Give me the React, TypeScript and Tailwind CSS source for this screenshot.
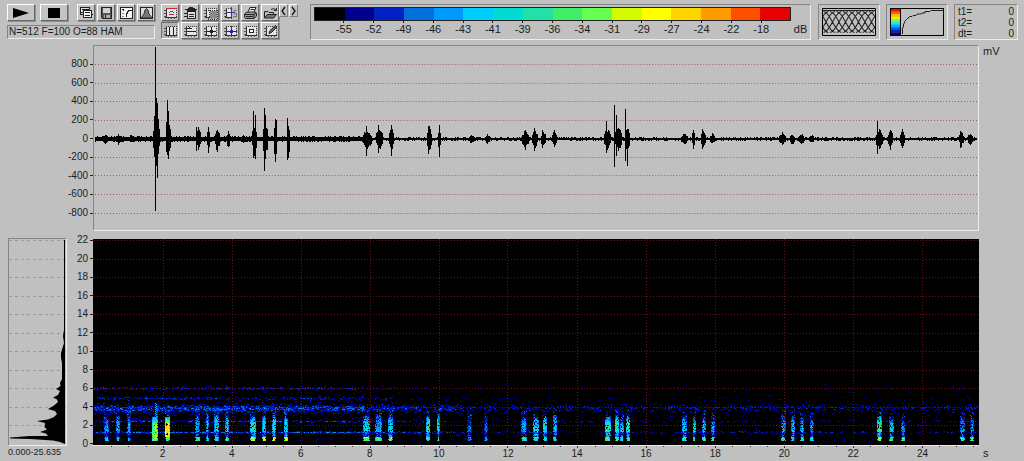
import type { ReactNode } from "react";

const PLOT_W = 885;
const WAVE_H = 184;
const SPEC_H = 206;
const SECOND = 34.45;

function randomSource(seed: number) {
  let s = seed;
  return () => {
    s = (s * 1664525 + 1013904223) >>> 0;
    return s / 4294967296;
  };
}

const scaleColours = [
  "#000000", "#00008c", "#0020c4", "#0070dc", "#0099ff", "#00ccff", "#00dcd4", "#22e0a8",
  "#40ee68", "#66ff50", "#d4fc00", "#ffff00", "#ffd400", "#ff9c00", "#ff5000", "#e60000",
];
const scaleLabels = [-55, -52, -49, -46, -43, -41, -39, -36, -34, -31, -29, -27, -24, -22, -18];
const amplitudeLabels = [800, 600, 400, 200, 0, -200, -400, -600, -800];
const frequencyLabels = [22, 20, 18, 16, 14, 12, 10, 8, 6, 4, 2, 0];
const timeLabels = [2, 4, 6, 8, 10, 12, 14, 16, 18, 20, 22, 24];

// centre, half width, rise, fall
const waveBursts = [
  [11, 3, 5, 5], [24, 2, 5, 6], [37, 2, 5, 5], [62, 3, 20, 18], [74, 2, 17, 16],
  [104, 2, 12, 11], [114, 1, 11, 13], [123, 2, 11, 13], [134, 1, 9, 11], [149, 1, 5, 5],
  [160, 2, 14, 16], [171, 2, 20, 20], [181, 1, 20, 22], [194, 1, 18, 20],
  [273, 4, 10, 11], [285, 3, 11, 11], [297, 2, 12, 12], [335, 2, 13, 13], [345, 1, 11, 12],
  [377, 2, 5, 5], [393, 2, 5, 5], [431, 3, 9, 10], [441, 3, 9, 9], [450, 2, 8, 8], [461, 2, 9, 8],
  [514, 3, 11, 12], [525, 3, 14, 13], [534, 2, 12, 12], [591, 3, 6, 6], [600, 1, 9, 9],
  [610, 2, 9, 9], [619, 2, 6, 6], [689, 3, 7, 6], [699, 2, 5, 6], [708, 2, 6, 6], [718, 2, 5, 5],
  [786, 3, 11, 11], [797, 2, 10, 10], [809, 2, 9, 9], [868, 2, 7, 8], [877, 2, 7, 7],
];

const wavePeaks: Record<number, [number, number]> = {
  60: [23, 18], 61: [92, 72], 62: [41, 27], 63: [36, 39], 64: [20, 15], 72: [17, 13], 73: [39, 16],
  74: [28, 20], 102: [12, 12], 114: [12, 14], 159: [28, 19], 161: [24, 20], 170: [31, 32], 171: [24, 20],
  181: [20, 23], 182: [19, 15], 193: [21, 21], 272: [13, 17], 284: [14, 14], 297: [14, 17], 334: [13, 15],
  335: [13, 11], 345: [14, 18], 431: [9, 11], 440: [11, 12], 449: [9, 9], 461: [9, 8], 513: [18, 14],
  521: [34, 28], 523: [24, 17], 532: [30, 22], 534: [10, 27], 600: [9, 10], 609: [10, 10],
  784: [18, 15], 797: [9, 11], 809: [10, 9], 867: [8, 9],
};

function buildWave() {
  const rand = randomSource(17);
  let d = "";
  for (let x = 1; x < PLOT_W - 1; x++) {
    const base = x < 272 ? 2 : 1;
    let up = base + (rand() > 0.7 ? 1 : 0);
    let down = base + (rand() > 0.7 ? 1 : 0);
    for (const [c, w, a, b] of waveBursts) {
      const t = 1 - Math.abs(x - c) / (w + 1);
      if (t > 0) {
        const body = Math.sqrt(t);
        up = Math.max(up, Math.round(a * body * (0.65 + rand() * 0.4)));
        down = Math.max(down, Math.round(b * body * (0.65 + rand() * 0.4)));
      }
    }
    const peak = wavePeaks[x];
    if (peak) [up, down] = peak;
    d += `M${x} ${93 - up}h1v${up + down}h-1z`;
  }
  return d;
}

// centre, width, first row, strength, foot strength
const calls = [
  [13, 5, 180, 4, 6], [25, 4, 175, 4, 6], [36, 4, 177, 4, 5], [62, 6, 178, 9, 10], [74, 5, 178, 11, 9],
  [104, 5, 176, 4, 9], [114, 3, 175, 5, 8], [123, 5, 174, 5, 8], [134, 4, 176, 5, 9],
  [160, 6, 178, 6, 11], [171, 4, 177, 6, 13], [181, 4, 176, 6, 12], [193, 4, 177, 6, 12],
  [273, 7, 176, 5, 10], [285, 7, 177, 4, 9], [297, 5, 177, 6, 10], [335, 4, 177, 7, 9], [345, 3, 175, 6, 9],
  [376, 5, 181, 3, 5], [393, 4, 180, 3, 5], [431, 6, 178, 4, 8], [442, 5, 178, 6, 8],
  [451, 4, 177, 6, 8], [461, 4, 176, 5, 8], [514, 6, 178, 7, 9], [523, 4, 177, 7, 9],
  [528, 4, 181, 5, 8], [534, 4, 177, 7, 9], [590, 5, 178, 5, 9], [600, 3, 178, 6, 9],
  [610, 4, 178, 5, 9], [619, 4, 179, 4, 9], [689, 5, 178, 4, 9], [699, 4, 178, 5, 8],
  [708, 4, 179, 5, 8], [718, 4, 179, 4, 8], [785, 5, 177, 7, 10], [797, 5, 180, 5, 9],
  [809, 4, 181, 4, 9], [868, 5, 178, 4, 9], [878, 4, 179, 4, 9],
];

function buildSpectrogram() {
  const rand = randomSource(91);
  const paths = scaleColours.map(() => "");
  const put = (x: number, y: number, level: number, w = 1) => {
    paths[Math.max(1, Math.min(15, Math.round(level)))] += `M${x} ${y}h${w}v1h-${w}z`;
  };
  // row, spread, density
  const lines = [
    [149, 1.4, 0.6], [159, 1.4, 0.6], [169, 3.4, 1], [182, 1, 0.7], [193, 1, 1.1],
  ];
  for (let x = 1; x < PLOT_W; x++) {
    const fade = x < 270 ? 1 : x < 370 ? 0.65 : 0.36;
    for (let y = 145; y < 205; y++) {
      let p = y > 160 ? 0.045 : 0.02;
      for (const [c, spread, amount] of lines) {
        const upper = c < 165 && x > 300 ? 0.25 : 1;
        p += amount * upper * Math.exp(-(((y - c) / spread) ** 2));
      }
      if (rand() < p * fade * 0.75) put(x, y, rand() * (1 + p * fade * 2.2) + 0.3, rand() < 0.5 ? 2 : 1);
    }
  }
  for (const [c, w, top, level, foot] of calls) {
    const left = c - Math.floor(w / 2);
    for (let y = top - 6; y < 202; y++) {
      for (let x = left; x < left + w; x++) {
        const edge = x === left || x === left + w - 1;
        if (y < top) {
          if (rand() < 0.4) put(x, y, 1 + rand() * 2);
        } else if (y >= 198) {
          if (!edge || rand() > 0.4) put(x, y, foot - rand() * 3 - (edge ? 2 : 0));
        } else if (rand() < (level > 8 ? 0.97 : 0.88)) {
          const ramp = Math.min(1, 0.45 + (y - top) / 12);
          const tail = y > 192 && level < 9 ? 0.55 : 1;
          put(x, y, level * ramp * tail + (rand() - 0.5) * 3 - (edge ? 1.5 : 0));
        }
      }
    }
  }
  for (let y = 164; y < 178; y++) put(62 + (y % 2), y, 3 + rand() * 3);
  return paths;
}

const waveShape = buildWave();
const spectrogramShapes = buildSpectrogram();

const rowOf = (khz: number) => Math.round(205 - khz * 9.27) + 0.5;

const sunken = "border border-t-[#858585] border-l-[#858585] border-b-[#ececec] border-r-[#ececec]";

function ToolButton({ label, children, wide, pressed }: { label: string; children: ReactNode; wide?: boolean; pressed?: boolean }) {
  return (
    <button
      type="button"
      aria-label={label}
      className={`flex h-[17px] shrink-0 items-center justify-center border ${wide ? "w-7" : "w-[18px]"} ${
        pressed
          ? "border-t-[#707070] border-l-[#707070] border-b-white border-r-white bg-[#b4b4b4]"
          : "border-t-white border-l-white border-b-[#686868] border-r-[#686868] bg-[#c4c4c4] shadow-[1px_1px_0_#909090]"
      }`}
    >
      {children}
    </button>
  );
}

function Glyph({ children }: { children: ReactNode }) {
  return (
    <svg viewBox="0 0 15 14" className="h-3.5 w-[15px] shrink-0" fill="none" stroke="#222" strokeWidth="1" shapeRendering="crispEdges" aria-hidden="true">
      {children}
    </svg>
  );
}

function Frame() {
  return (
    <>
      <path d="M4 3h9v8H4z" fill="#e6e6e6" stroke="none" />
      <path d="M3.5 2v10M2 11.5h12" stroke="#333" />
      <path d="M3 2.5h11M13.5 2v10" stroke="#444" strokeDasharray="1 1" />
      <path d="M1 4.5h2M1 7.5h2M1 10.5h2M5.5 12v1M8.5 12v1M11.5 12v1" stroke="#555" />
    </>
  );
}

const fileTools = [
  {
    label: "Copy",
    art: (
      <>
        <path d="M1.5 1.5h9v7h-9z" fill="#ddd" />
        <path d="M4.5 4.5h8v7h-8z" fill="#f4f4f4" />
        <path d="M3 3.5h8M10.5 2v3M6 6.5h5M6 9.5h5" />
        <path d="M2 6.5h2M12 8.500h2" />
      </>
    ),
  },
  {
    label: "Save",
    art: (
      <>
        <path d="M2.5 1.5h10v11h-9l-1-1z" fill="#555" />
        <path d="M4 2h7v5H4z" fill="#d0d0d0" stroke="none" />
        <path d="M5 9h6v3H5z" fill="#aaa" stroke="none" />
        <path d="M6.5 9v3" />
      </>
    ),
  },
  {
    label: "Transfer curve",
    art: (
      <>
        <path d="M1.5 1.5h12v11h-12z" fill="#f4f4f4" />
        <path d="M4.5 3v2M3 3.5h2M7.5 11V7.5h1V5.5h1V4.500h3" />
        <path d="M3 7.5h2M3 10.5h2" stroke="#888" />
      </>
    ),
  },
  {
    label: "Spectrum",
    art: (
      <>
        <path d="M1.5 1.5h12v11h-12z" fill="#ddd" />
        <path d="M2 12l3-4 1-4 1.5-1.500L9 4l1 4 3 4z" fill="#777" stroke="#333" shapeRendering="auto" />
      </>
    ),
  },
];

const viewTools = [
  {
    label: "Display",
    art: (
      <>
        <Frame />
        <path d="M3 2.5h11" stroke="#c03030" />
        <path d="M7 5.5h3M6 6.5h1M10 6.5h1M6 8.5h5" stroke="#c02040" />
      </>
    ),
  },
  {
    label: "Print setup",
    art: (
      <>
        <path d="M4.5 4.5h8v8h-8z" fill="#ddd" />
        <path d="M2 3.5h12M5 2.5h7M6 1.5h4M4 5.5h9M1 7.5h3M1 10.5h3M6 8.5h5M6 10.5h5" />
      </>
    ),
  },
  {
    label: "Selection",
    art: (
      <>
        <Frame />
        <path d="M7 5h7v7H7z" fill="#8a8a8a" stroke="none" />
        <path d="M5 4.5h9M6.5 4v8M5 13.5h9M14.5 4v9" stroke="#333" strokeDasharray="1 1" />
      </>
    ),
  },
  {
    label: "Cursor spectrum",
    art: (
      <>
        <Frame />
        <path d="M9 2h5v11H9z" fill="#b8b8b8" stroke="none" />
        <path d="M8.5 1v12M4 6.5h7" stroke="#3030c8" />
        <path d="M13 4.5h-2v3h2v3h-3" stroke="#777" />
      </>
    ),
  },
  {
    label: "Print",
    art: (
      <g shapeRendering="auto">
        <path d="M5 6l2-4.500h6L11 6" fill="#f0f0f0" />
        <path d="M1.500 8L4 6h8l1.500 1v3L11 12.500H2.500l-1-1z" fill="#9a9a9a" />
        <path d="M2 8.500h9l2-1.500M3 10.500h7M11 8.500v4M7.500 3.500h4" />
      </g>
    ),
  },
  {
    label: "Open",
    art: (
      <g shapeRendering="auto">
        <path d="M1.500 12V5.500H5l1 1h4.500v2" fill="#bbb" />
        <path d="M1.500 12L4.500 8.500h9l-3 3.500z" fill="#777" />
        <path d="M8 3.500q3-2 5 .5M13.500 2v2.500H11" />
      </g>
    ),
  },
];

const cursorTools = [
  { label: "Vertical cursors", art: <><Frame /><path d="M6.5 3v8M10.5 3v8" /></> },
  { label: "Horizontal cursors", art: <><Frame /><path d="M4 4.5h5M4 7.5h9M6.5 3v2" /></> },
  { label: "Cross cursor", art: <><Frame /><path d="M8.5 3v8M4 7.5h9M7 6.5h3M7 8.5h3" /></> },
  { label: "Linked cursor", art: <><Frame /><path d="M8.5 2v10M3 7.5h11M7 6.5h3M7 8.5h3" stroke="#2020c0" /></> },
  { label: "Box", art: <><Frame /><path d="M6.5 5.500h4v3h-4z" fill="#fff" /></> },
  { label: "Annotate", art: <><Frame /><path d="M6 9.500l1-3 5.500-5 1.500 1.500L8.500 8.500z" fill="#666" shapeRendering="auto" /></> },
];

function Toolbar() {
  return (
    <div className="flex shrink-0 items-start">
      <div className="mr-1.5 w-[148px]">
        <div className="flex items-center justify-between">
          <ToolButton label="Play" wide>
            <svg viewBox="0 0 16 10" className="h-2.5 w-4" aria-hidden="true"><path d="M0 0l16 5-16 5z" /></svg>
          </ToolButton>
          <ToolButton label="Stop" wide>
            <svg viewBox="0 0 12 10" className="h-2.5 w-3" aria-hidden="true"><path d="M0 0h12v10H0z" /></svg>
          </ToolButton>
          <div className="ml-1 flex gap-0.5">
            {fileTools.map((t) => <ToolButton key={t.label} label={t.label}><Glyph>{t.art}</Glyph></ToolButton>)}
          </div>
        </div>
        <p className={`mt-1 h-3.5 truncate pl-px text-[10px] leading-3 ${sunken}`}>N=512 F=100 O=88 HAM</p>
      </div>
      <div className="flex flex-col gap-px">
        <div className="flex gap-0.5">
          {viewTools.map((t) => <ToolButton key={t.label} label={t.label}><Glyph>{t.art}</Glyph></ToolButton>)}
        </div>
        <div className="flex gap-0.5">
          {cursorTools.map((t, i) => <ToolButton key={t.label} label={t.label} pressed={i === 0}><Glyph>{t.art}</Glyph></ToolButton>)}
        </div>
      </div>
      <div className="flex gap-px">
        {["M5 1L2 5l3 4", "M2 1l3 4-3 4"].map((d, i) => (
          <button key={d} type="button" aria-label={i ? "Scroll right" : "Scroll left"} className="flex h-[13px] w-[9px] items-center justify-center border border-t-white border-l-white border-b-[#808080] border-r-[#808080]">
            <svg viewBox="0 0 7 10" className="h-2.5 w-[7px] shrink-0" fill="none" stroke="#111" strokeWidth="1.3" aria-hidden="true"><path d={d} /></svg>
          </button>
        ))}
      </div>
    </div>
  );
}

function LevelScale() {
  return (
    <div className={`ml-3 h-9 min-w-0 flex-1 pt-0.5 pl-[3px] ${sunken}`}>
      <div className="mr-[19px] flex h-3.5 border border-[#202020]">
        {scaleColours.map((c) => <span key={c} className="flex-1" style={{ backgroundColor: c }} />)}
      </div>
      <div className="flex text-[11px] leading-[13px]">
        <div className="flex min-w-0 flex-1">
          <span className="flex-1" />
          {scaleLabels.map((v) => (
            <span key={v} className="flex w-0 flex-[2] flex-col items-center">
              <span className="h-0.5 w-px bg-[#222]" />
              {v}
            </span>
          ))}
          <span className="flex-1" />
        </div>
        <span className="w-[19px] pt-0.5 text-center">dB</span>
      </div>
    </div>
  );
}

function WindowPreview() {
  const waves = Array.from({ length: 12 }, (_, i) => {
    const x = -18 + i * 6.5;
    return `M${x} 3.500C${x + 7} 3.500 ${x + 11} 24.500 ${x + 18} 24.500M${x + 18} 3.500C${x + 11} 3.500 ${x + 7} 24.500 ${x} 24.500`;
  }).join("");
  return (
    <div className={`ml-[7px] h-9 w-[62px] shrink-0 p-[3px] ${sunken}`}>
      <svg viewBox="0 0 54 28" className="h-7 w-[54px]" fill="none" stroke="#222" role="img" aria-label="Window overlap">
        <path d={waves} strokeWidth="1.1" />
        <path d="M0 2.500h54" />
        <path d="M.5.5h53v27H.5z" stroke="#000" />
      </svg>
    </div>
  );
}

function TransferPreview() {
  return (
    <div className={`ml-1.5 h-9 w-[62px] shrink-0 p-[3px] ${sunken}`}>
      <svg viewBox="0 0 54 28" className="h-7 w-[54px]" fill="none" stroke="#222" role="img" aria-label="Colour transfer curve">
        {["#f01000", "#ff6000", "#ffb800", "#e8f000", "#70f070", "#20e8d0", "#00b0ff", "#0060f0", "#0020c0", "#000080"].map((c, i) => (
          <rect key={c} x="1" y={1 + i * 2.6} width="9" height="2.8" fill={c} stroke="none" />
        ))}
        <path d="M.5.5h53v27H.5zM10.500 1v26" stroke="#000" shapeRendering="crispEdges" />
        <path d="M12.500 26V20l1-1V16l1-1V13.500l2-2L18 10l2-1.500h2l1-1h3l1-1.500h4l1-1h3V3.500h5l1-1h12" />
      </svg>
    </div>
  );
}

function CursorTimes() {
  return (
    <dl className={`mr-1.5 ml-1.5 h-9 w-16 shrink-0 px-[3px] pt-px text-[10px] leading-[11px] ${sunken}`}>
      {["t1=", "t2=", "dt="].map((name) => (
        <div key={name} className="flex justify-between"><dt>{name}</dt><dd>0</dd></div>
      ))}
    </dl>
  );
}

function AxisLabels({ values }: { values: number[] }) {
  return (
    <>
      {values.map((v) => (
        <span key={v} className="flex items-center justify-end gap-0.5 leading-3">
          {v}
          <span className="h-px w-[3px] bg-[#222]" />
        </span>
      ))}
    </>
  );
}

function Waveform() {
  return (
    <svg viewBox={`0 0 ${PLOT_W} ${WAVE_H}`} preserveAspectRatio="none" className="block h-[184px] w-full" role="img" aria-label="Waveform" shapeRendering="crispEdges">
      {[19, 38, 56, 75, 112, 130, 149, 168].map((y) => (
        <path key={y} d={`M1 ${y - 0.5}h${PLOT_W - 2}`} stroke="#a35c5c" strokeDasharray="1 2" />
      ))}
      <path d={waveShape} fill="#000" />
    </svg>
  );
}

function Spectrogram() {
  return (
    <svg viewBox={`0 0 ${PLOT_W} ${SPEC_H}`} preserveAspectRatio="none" className="block h-[206px] w-full bg-black" role="img" aria-label="Spectrogram" shapeRendering="crispEdges">
      {spectrogramShapes.map((d, i) => d && <path key={scaleColours[i]} d={d} fill={scaleColours[i]} />)}
      <g stroke="#6c1414" strokeDasharray="1 2">
        {frequencyLabels.slice(0, -1).map((f) => <path key={f} d={`M1 ${rowOf(f)}h${PLOT_W - 1}`} />)}
        {timeLabels.map((t) => <path key={t} d={`M${Math.round(1 + t * SECOND) + 0.5} 0v${SPEC_H}`} />)}
      </g>
    </svg>
  );
}

function Spectrum() {
  return (
    <div className={`ml-2 h-[208px] w-[59px] shrink-0 ${sunken}`}>
      <svg viewBox="0 0 57 206" preserveAspectRatio="none" className="block h-full w-full" role="img" aria-label="Mean spectrum">
        <g stroke="#9a9a9a" strokeDasharray="3 3" shapeRendering="crispEdges">
          {frequencyLabels.slice(0, -1).map((f) => <path key={f} d={`M0 ${rowOf(f)}h57`} />)}
        </g>
        <path d="M55 1V91L54 97 55 104 52 114V119L53 124V140L51 144 51.500 147 47 150 51 152 49 156 44 158.500 48 160.500 49 163 45 166.500 39 170 46 172 48 175 45 178 39 180.500 28 182 36 184 35.500 188 38 190.500 31 193 37 194.500 39 197H21L1 198.500V199.500L21 200 44 201.500 51 203 56 205V1z" />
      </svg>
    </div>
  );
}

function TimeAxis() {
  return (
    <div className="border-t border-[#e8e8e8]">
      <svg viewBox={`0 0 ${PLOT_W} 2`} preserveAspectRatio="none" className="block h-0.5 w-full" shapeRendering="crispEdges" aria-hidden="true">
        {Array.from({ length: 51 }, (_, i) => (
          <path key={i} d={`M${Math.round(1 + ((i + 1) * SECOND) / 2) + 0.5} 0v${(i + 1) % 4 ? 1 : 2}`} stroke="#333" />
        ))}
      </svg>
      <div className="flex text-[10px] leading-3">
        <span className="flex-[35]" />
        {timeLabels.map((t) => <span key={t} className="w-0 flex-[69] text-center">{t}</span>)}
        <span className="flex-[22]" />
      </div>
    </div>
  );
}

export default function App() {
  return (
    <main className="min-h-screen bg-[#c0c0c0] pt-1 font-['Liberation_Sans',Arial,sans-serif] text-[11px] text-[#1c1c1c]">
      <header className="flex items-start pl-[7px]">
        <Toolbar />
        <LevelScale />
        <WindowPreview />
        <TransferPreview />
        <CursorTimes />
      </header>

      <section className="mt-[5px] grid grid-cols-[93px_minmax(0,1fr)_45px]">
        <div className="flex flex-col justify-between pt-[13px] pb-3 text-right text-[10px]">
          <AxisLabels values={amplitudeLabels} />
        </div>
        <div className={sunken}>
          <Waveform />
        </div>
        <span className="pl-1 leading-3">mV</span>
      </section>

      <section className="mt-[7px] grid grid-cols-[93px_minmax(0,1fr)_45px]">
        <div className="flex">
          <Spectrum />
          <div className="-mt-1 -mb-1 flex h-[216px] flex-1 flex-col justify-between text-[10px]">
            <AxisLabels values={frequencyLabels} />
          </div>
        </div>
        <div className="pt-px">
          <Spectrogram />
          <TimeAxis />
        </div>
        <span className="self-end pb-px pl-1 leading-3">s</span>
        <p className="-mt-3.5 pl-2 text-[9px] leading-3">0.000-25.635</p>
      </section>
    </main>
  );
}
